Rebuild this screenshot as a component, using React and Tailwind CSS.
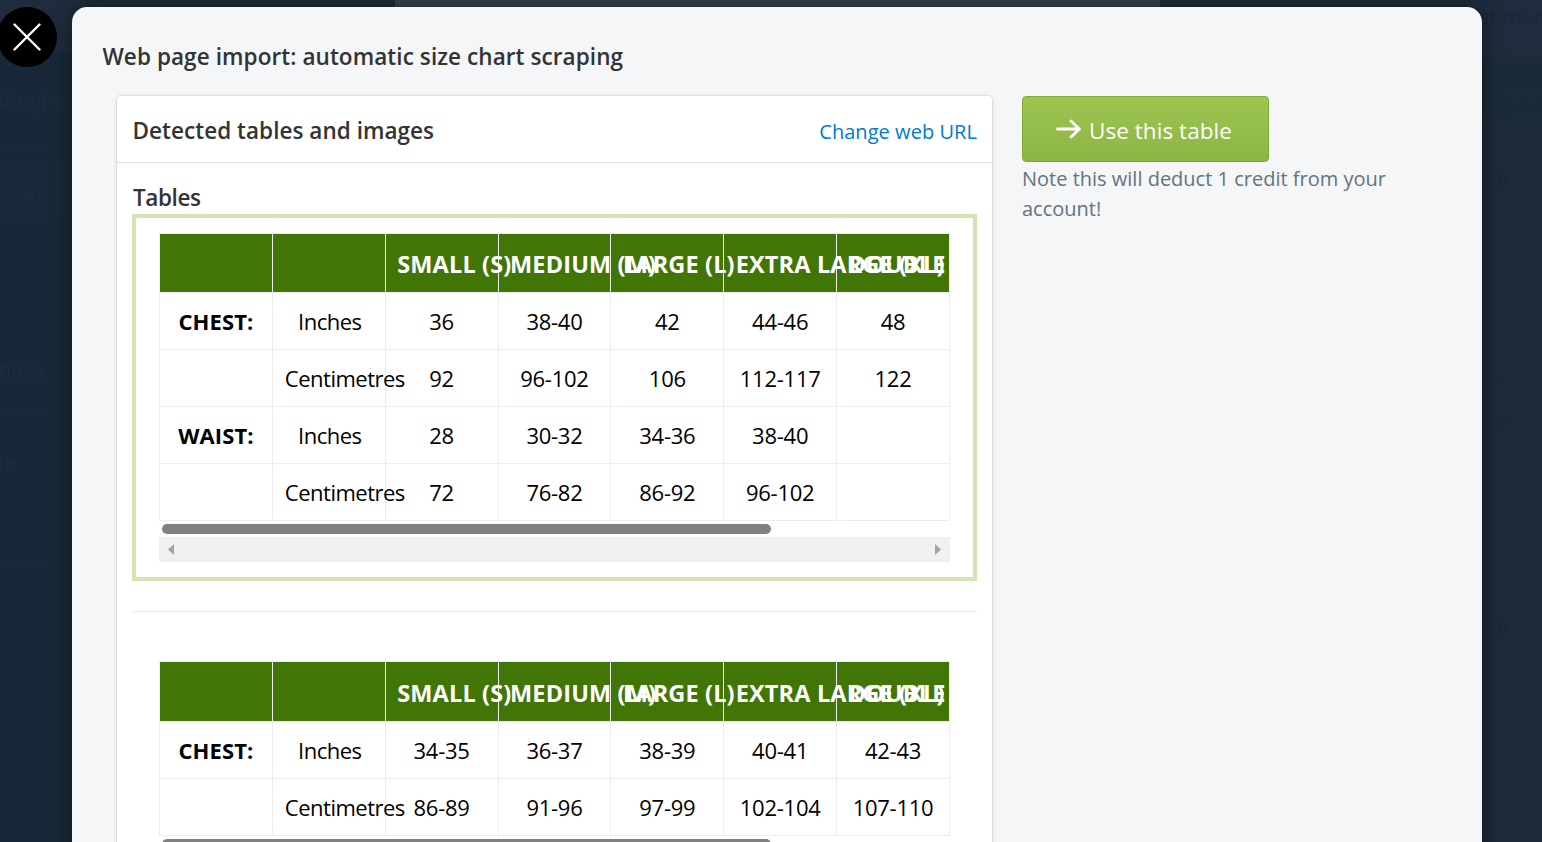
const HEADERS = ['', '', 'SMALL (S)', 'MEDIUM (M)', 'LARGE (L)', 'EXTRA LARGE (XL)', 'DOUBLE'];

const TABLES = [
  {
    id: 'table-1',
    selected: true,
    headClass: 'h-[59px]',
    rows: [
      ['CHEST:', 'Inches', '36', '38-40', '42', '44-46', '48'],
      ['', 'Centimetres', '92', '96-102', '106', '112-117', '122'],
      ['WAIST:', 'Inches', '28', '30-32', '34-36', '38-40', ''],
      ['', 'Centimetres', '72', '76-82', '86-92', '96-102', ''],
    ],
  },
  {
    id: 'table-2',
    selected: false,
    headClass: 'h-[60px]',
    rows: [
      ['CHEST:', 'Inches', '34-35', '36-37', '38-39', '40-41', '42-43'],
      ['', 'Centimetres', '86-89', '91-96', '97-99', '102-104', '107-110'],
    ],
  },
];

const cellStyle = (col) => {
  if (col === 0) return 'font-bold tracking-[0.1px]';
  if (col === 1) return 'tracking-[-0.5px] pl-[12px] pr-[10px]';
  return 'tracking-[-0.25px]';
};

const ScrollBars = () => (
  <div>
    <div className="h-4 pt-[3px] pl-[3px]">
      <div className="h-[10px] w-[609px] rounded-full bg-[#808080]"></div>
    </div>
    <div className="h-[25px] bg-[#f0f0f0] flex items-center justify-between pl-[9px] pr-[9px]">
      <svg width="6" height="11" viewBox="0 0 6 11"><path d="M6 0v11L0 5.5z" fill="#a3a3a3" /></svg>
      <svg width="6" height="11" viewBox="0 0 6 11"><path d="M0 0v11l6-5.5z" fill="#a3a3a3" /></svg>
    </div>
  </div>
);

const SizeTable = ({ table }) => (
  <div className={`border-4 px-[23px] py-[15px] ${table.selected ? 'border-[#d3e4b4]' : 'border-transparent'}`}>
    <table className="w-[791px] table-fixed border-collapse text-center text-[22px] leading-[30px] text-black whitespace-nowrap">
      <thead>
        <tr className={table.headClass}>
          {HEADERS.map((h, i) => (
            <th key={i} className="border border-[#ebeef1] bg-[#417505] pl-[11.5px] pr-0 pt-[2px] pb-0 font-bold text-left text-[23.5px] text-white tracking-[0.15px]">{h}</th>
          ))}
        </tr>
      </thead>
      <tbody>
        {table.rows.map((row, r) => (
          <tr key={r} className="h-[57px]">
            {row.map((cell, c) => (
              <td key={c} className={`border border-[#ebeef1] py-0 ${c === 1 ? '' : 'px-[11px]'} ${cellStyle(c)}`}>{cell}</td>
            ))}
          </tr>
        ))}
      </tbody>
    </table>
    <ScrollBars />
  </div>
);

// Dimmed admin page that stays visible around the modal
const Backdrop = () => (
  <div className="absolute inset-0 flex flex-col bg-[#1d2b3b] text-[20px] leading-[30px] whitespace-nowrap">
    <div className="h-[53px] shrink-0 flex bg-[#1f2c3d]">
      <div className="ml-[395px] w-[765px] shrink-0 h-9 bg-[#35444f]"></div>
      <div className="ml-[320px] pt-[2px] text-[#1a2838]">store.myshopify.com</div>
    </div>
    <div className="flex-1 flex">
      <div className="w-[395px] shrink-0 bg-[#182838] text-[#1d2d3e]">
        <div className="h-[92px] border-b border-[#1b2c3b] pt-[33px]"><span className="-ml-[6px]">Shopify</span></div>
        <div className="h-[271px] border-b border-[#1b2c3b] pt-[15px]">
          <div className="h-[60px] bg-[#192939] pt-[17px]"><span className="-ml-[6px]">board</span></div>
          <div className="mt-[136px]"><span className="-ml-[1px]">tings</span></div>
        </div>
        <div className="h-[151px] border-b border-[#1b2c3b] pt-[32px]"><span className="-ml-[3px]">te</span></div>
      </div>
      <div className="flex-1 pt-[11px] text-[#1a2939]">
        <div className="h-[54px] bg-[#1a2a37] pt-[13px] pl-[1107px] text-[#1d2d39]">Add</div>
        <div className="h-[261px] border-b border-[#1b2a39] pt-[45px] pl-[1081px]">cate</div>
        <div className="pt-[27px] pl-[1081px]">cate</div>
        <div className="pt-[176px] pl-[1081px]">cate</div>
      </div>
    </div>
  </div>
);

export default function App() {
  return (
    <div className="relative h-[842px] w-[1542px] overflow-hidden font-['Open_Sans','Noto_Sans',sans-serif]">
      <Backdrop />

      <button className="absolute -left-[3px] top-[7px] size-[60px] rounded-full bg-black flex items-center justify-center" aria-label="Close">
        <svg width="28" height="28" viewBox="0 0 28 28" fill="none" stroke="#fff" strokeWidth="2.4" strokeLinecap="round">
          <path d="M1.5 1.5l25 25M26.5 1.5l-25 25" />
        </svg>
      </button>

      <div className="relative mt-[7px] ml-[72px] w-[1410px] h-[900px] rounded-[15px] bg-[#f4f6f8] shadow-[0_0_22px_rgba(0,0,0,0.45)]">
        <h1 className="pl-[30.5px] pt-[35px] text-[22.5px] leading-[30px] font-semibold text-[#333] tracking-[0.08px]">Web page import: automatic size chart scraping</h1>

        <div className="mt-6 pl-[45px] flex items-start gap-[30px]">
          {/* Detected tables */}
          <div className="w-[875px] h-[820px] shrink-0 rounded-[4px] bg-white shadow-[0_0_0_1px_rgba(63,63,68,0.07),0_1px_4px_rgba(63,63,68,0.18)]">
            <div className="h-[67px] border-b border-[#dfe3e8] pl-[15.5px] pr-[15px] flex items-center justify-between">
              <h2 className="text-[22.5px] leading-[30px] pt-[3px] font-semibold text-[#333] tracking-[0.04px]">Detected tables and images</h2>
              <a href="#" className="text-[20px] leading-[30px] pt-[5px] text-[#007ace] tracking-[0.05px]">Change web URL</a>
            </div>
            <div className="px-[15px] pt-5">
              <h3 className="-mt-px mb-px pl-px text-[22.5px] leading-[31px] font-semibold text-[#333] tracking-[-0.4px]">Tables</h3>
              <SizeTable table={TABLES[0]} />
              <hr className="my-[30px] border-t border-[#ebebeb]" />
              <SizeTable table={TABLES[1]} />
            </div>
          </div>

          {/* Action */}
          <div className="w-[400px]">
            <button className="h-[66px] w-[247px] pr-[3px] rounded-[4px] border border-[#80aa32] bg-linear-to-b from-[#9dc552] to-[#8db543] flex items-center justify-center gap-2 text-[22.5px] text-white">
              <svg width="25" height="20" viewBox="0 0 25 20" fill="none" stroke="#fff" strokeWidth="2.8" strokeLinecap="round" strokeLinejoin="round">
                <path d="M1.5 10h22M15 2l8.3 8-8.3 8" />
              </svg>
              <span className="pt-[4px] tracking-[0.05px] whitespace-nowrap">Use this table</span>
            </button>
            <p className="pt-[2px] text-[20px] leading-[30px] text-[#637381]">Note this will deduct 1 credit from your<br />account!</p>
          </div>
        </div>
      </div>
    </div>
  );
}
